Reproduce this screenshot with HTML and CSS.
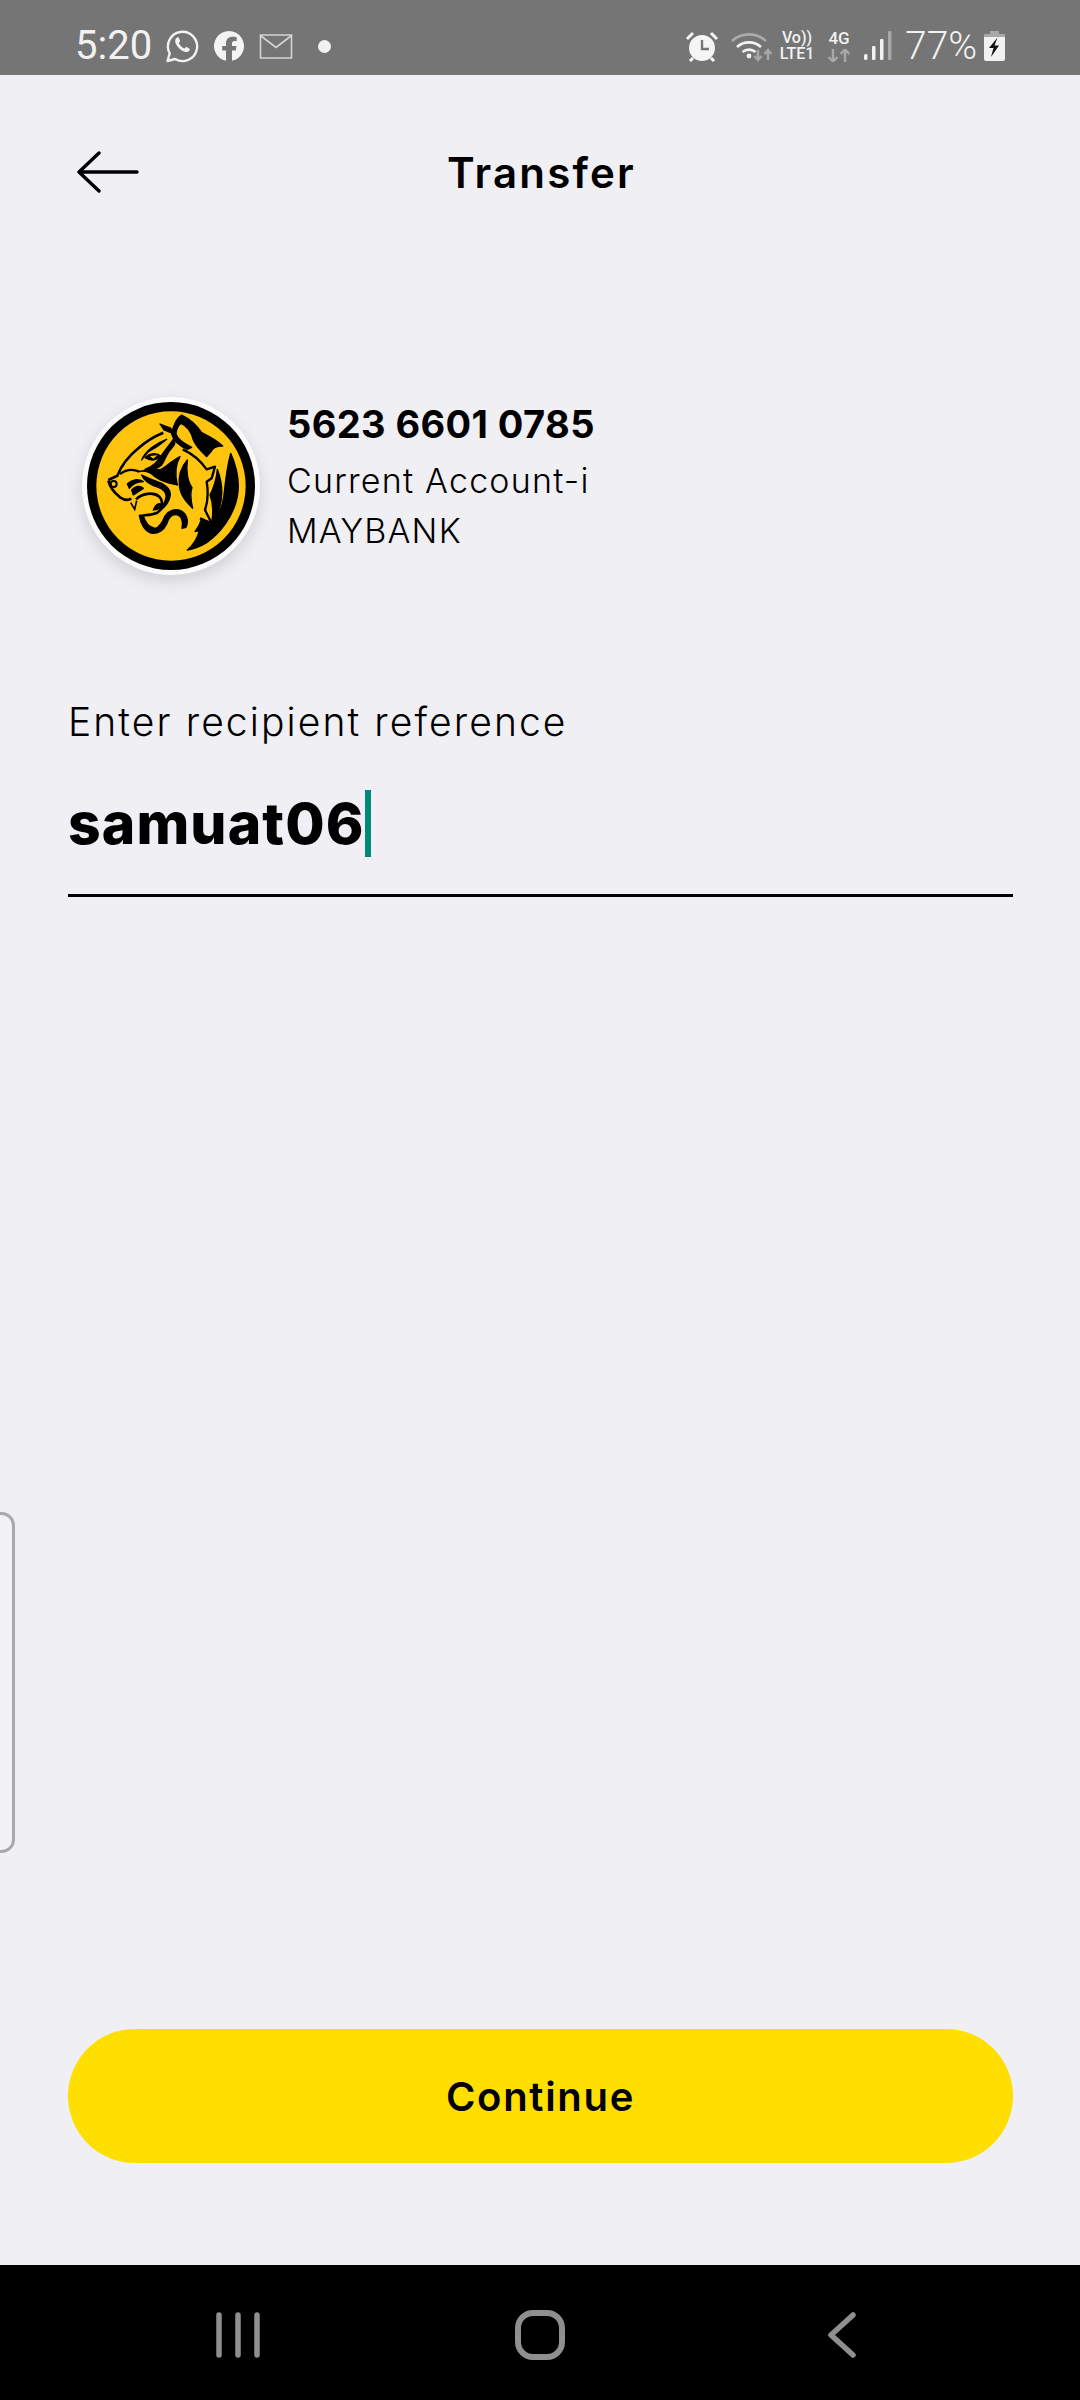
FILE: index.html
```html
<!DOCTYPE html>
<html lang="en">
<head>
<meta charset="utf-8">
<title>Transfer</title>
<link rel="stylesheet" href="styles.css">
</head>
<body>
<div class="screen">
  <div class="status">
    <div class="status-left">
      <span class="clock">5:20</span>
      <svg class="ic-wa" viewBox="0 0 33 34"><path d="M2 32l2.2-7.6A14.6 14.6 0 1 1 9.6 30z" fill="none" stroke="#f2f2f2" stroke-width="2.4" stroke-linejoin="round"/><path d="M11.5 8.5c-2.2 1.5-2.5 4-.8 7 2 3.6 5 6.3 8.3 7.3 2.8.8 4.8-.3 5.5-2.3.2-.6-3.2-2.7-3.8-2.5l-1.7 1.5c-2.3-.7-4.8-3.2-5.7-5.5l1.3-1.7c.2-.6-1.6-4.3-2.1-4.2z" fill="#f2f2f2"/></svg>
      <svg class="ic-fb" viewBox="0 0 30 30"><path d="M12 29.8A15 15 0 1 1 18 29.8V19.5h3.8l.7-4.4H18v-2.7c0-1.4.7-2.4 2.5-2.4h2.2V6.2c-6-1.2-10.5.2-10.7 6v2.9H8.2v4.4H12z" fill="#f4f4f4"/></svg>
      <svg class="ic-mail" viewBox="0 0 33 25"><path d="M1 1h31v23H1zM1.5 2l15 11.5L31.5 2" fill="none" stroke="#d4d4d4" stroke-width="1.6"/></svg>
      <span class="dot"></span>
    </div>
    <div class="status-right">
      <svg class="ic-alarm" viewBox="0 0 34 31"><circle cx="17" cy="17" r="13" fill="#f5f5f5"/><path d="M17 9v9h7" fill="none" stroke="#757575" stroke-width="2.4"/><path d="M2 8l6-6M32 8l-6-6M5 30l3-3M29 30l-3-3" stroke="#f5f5f5" stroke-width="3"/></svg>
      <svg class="ic-wifi" viewBox="0 0 42 31"><path d="M1 10a25 25 0 0 1 34 0" fill="none" stroke="#ababab" stroke-width="2.6"/><path d="M6 16a18 18 0 0 1 24 0M11.5 21a10 10 0 0 1 13 0" fill="none" stroke="#f2f2f2" stroke-width="2.6"/><circle cx="18" cy="25" r="2.4" fill="#f2f2f2"/><path d="M27 19v10M23.5 25l3.5 4 3.5-4M37 29V19M33.5 23l3.5-4 3.5 4" fill="none" stroke="#a8a8a8" stroke-width="2.4"/></svg>
      <div class="volte"><span>Vo))</span><span>LTE1</span></div>
      <div class="net">
        <span>4G</span>
        <svg class="ic-updown" viewBox="0 0 24 13"><path d="M6 0v12M1.5 8L6 12.5 10.5 8M18 13V1M13.5 5L18 .5 22.5 5" fill="none" stroke="#a8a8a8" stroke-width="2.4"/></svg>
      </div>
      <svg class="ic-signal" viewBox="0 0 28 30"><g fill="#f2f2f2"><rect x="0" y="23" width="3.5" height="6" rx="1.5"/><rect x="8" y="15" width="3.5" height="14" rx="1"/><rect x="16" y="8" width="3.5" height="21" rx="1"/></g><rect x="24" y="0" width="3.5" height="29" rx="1" fill="#a8a8a8"/></svg>
      <span class="pct">77%</span>
      <svg class="ic-batt" viewBox="0 0 21 30"><path d="M6 0h9v3h6v10H0V3h6z" fill="#a8a8a8"/><path d="M0 13h21v15a2 2 0 0 1-2 2H2a2 2 0 0 1-2-2z" fill="#f2f2f2"/><rect y="6" width="21" height="8" fill="#f2f2f2"/><path d="M13.5 6.5L5 17h4.5l-2.500 9 8-11.500h-4.500z" fill="#111"/></svg>
    </div>
  </div>

  <main class="main">
    <header class="topbar">
      <svg class="back" viewBox="0 0 62 42"><path d="M2 21h58M22 2L2 21l20 19" fill="none" stroke="#000" stroke-width="3.4" stroke-linecap="round" stroke-linejoin="round"/></svg>
      <h1 class="title">Transfer</h1>
      <span></span>
    </header>

    <section class="account">
      <div class="logo">
        <svg viewBox="-54 -39 534 534">
          <circle cx="213" cy="228" r="252" fill="#000"/>
          <circle cx="213" cy="228" r="224" fill="#fec40e"/>
          <path d="M25 210L52 197C65 165 90 135 115 115C140 92 165 78 190 68" fill="none" stroke="#000" stroke-width="8"/>
          <path d="M25 212C30 232 45 250 60 262C72 270 84 272 94 266" fill="none" stroke="#000" stroke-width="8"/>
          <circle cx="41" cy="222" r="9" fill="none" stroke="#000" stroke-width="6"/>
          <path d="M60 192C82 176 102 178 118 185" fill="none" stroke="#000" stroke-width="7"/>
          <path d="M248 118C275 130 300 150 320 178L345 170L335 205L320 215C325 245 322 280 315 300L335 340L300 325" fill="none" stroke="#000" stroke-width="7" stroke-linejoin="round"/>
          <path d="M108 268C125 250 160 245 178 260C192 275 188 295 172 308C155 315 135 315 118 318" fill="none" stroke="#000" stroke-width="8"/>
          <path d="M92 278L104 298L110 272" fill="none" stroke="#000" stroke-width="5"/>
          <g fill="#000" stroke="#000" stroke-width="4" stroke-linejoin="round">
            <path d="M180 42L212 54L218 70L192 60Z"/>
            <path d="M245 15C272 28 292 48 305 68C325 78 350 90 368 108C350 108 338 112 333 125L320 140C305 125 288 110 280 90C275 70 262 48 243 40C235 45 228 60 228 72C232 88 250 100 275 112L262 118C240 108 220 92 215 72C220 45 232 22 245 15Z"/>
            <path d="M392 130C410 170 420 215 412 260C400 320 360 370 320 398C300 410 280 418 262 420C280 405 292 385 298 362L285 365C295 352 302 338 305 325L330 345C355 320 368 290 372 255C376 215 380 175 392 130Z"/>
            <path d="M352 178C368 220 370 262 356 302C350 320 342 332 335 338C340 310 340 280 330 255C342 232 350 205 352 178Z"/>
            <path d="M262 150C245 170 235 195 238 225C240 255 258 275 278 295C272 270 270 250 276 232C262 215 258 180 262 150Z"/>
            <path d="M125 150C135 125 165 100 200 88C180 105 165 115 150 122C140 128 132 140 125 150Z"/>
            <path d="M135 143C150 128 172 128 182 138C172 150 155 155 135 143Z"/>
            <path d="M135 178C155 172 175 155 190 128L220 88C228 95 225 105 215 115C200 130 195 150 185 165C170 178 150 182 135 178Z"/>
            <path d="M118 185C130 180 150 185 165 200C185 215 210 220 232 225C225 195 225 165 240 140C210 155 195 175 182 178C165 180 140 178 118 185Z"/>
            <path d="M125 195C130 210 150 225 175 232C190 238 200 245 198 262C195 280 180 300 170 310C185 300 205 285 210 260C215 240 200 228 185 220C165 212 145 205 125 195Z"/>
            <path d="M82 222C95 208 115 205 130 215C115 215 100 220 88 235Z"/>
            <path d="M95 240C105 228 120 225 130 235L100 255Z"/>
            <path d="M160 300C165 285 175 278 185 282C182 292 175 300 160 300Z"/>
            <path d="M118 316L130 318C135 335 145 352 165 355C180 352 188 335 195 318C205 302 225 295 242 302C258 310 268 330 258 352L246 355C250 335 245 318 230 314C215 312 205 325 200 342C192 360 175 372 155 370C135 365 122 342 118 316Z"/>
          </g>
          <path d="M150 138L172 136L160 146Z" fill="#fec40e"/>
        </svg>
      </div>
      <div class="account-info">
        <div class="acc-no">5623 6601 0785</div>
        <div class="acc-line">Current Account-i</div>
        <div class="acc-line">MAYBANK</div>
      </div>
    </section>

    <section class="field">
      <label class="field-label">Enter recipient reference</label>
      <div class="field-input"><span class="field-value">samuat06</span><span class="caret"></span></div>
    </section>

    <div class="actions">
      <button class="continue" type="button">Continue</button>
    </div>
  </main>

  <nav class="navbar">
    <svg class="nav-recent" viewBox="0 0 44 46"><path d="M3 3v40M22 3v40M41 3v40" stroke="#8f8f8f" stroke-width="5.5" stroke-linecap="round"/></svg>
    <svg class="nav-home" viewBox="0 0 50 50"><rect x="3" y="3" width="44" height="44" rx="15" fill="none" stroke="#8f8f8f" stroke-width="6"/></svg>
    <svg class="nav-back" viewBox="0 0 28 46"><path d="M25 3L3 23l22 20" fill="none" stroke="#8f8f8f" stroke-width="5.5" stroke-linecap="round" stroke-linejoin="round"/></svg>
  </nav>

  <div class="edge-handle"></div>
</div>
</body>
</html>
```

FILE: styles.css
```css
* { box-sizing: border-box; }
html, body { margin: 0; padding: 0; }
body { font-family: Inter, "Open Sans", sans-serif; color: #000; background: #efeff4; }
svg { display: block; flex: none; }

.screen { position: relative; width: 1080px; height: 2400px; display: flex; flex-direction: column; overflow: hidden; }

.status { height: 75px; flex: none; background: #757575; display: flex; justify-content: space-between; align-items: center; padding: 17px 75px 0; color: #f2f2f2; }
.status-left, .status-right { display: flex; align-items: center; }
.clock { font-family: Roboto, sans-serif; font-size: 40px; line-height: 46px; width: 90px; }
.ic-wa { width: 34px; height: 34px; }
.ic-fb { width: 30px; height: 30px; margin-left: 15px; }
.ic-mail { width: 34px; height: 25px; margin-left: 15px; }
.dot { width: 13px; height: 13px; border-radius: 50%; background: #f2f2f2; margin-left: 25px; }
.ic-alarm { width: 34px; height: 31px; }
.ic-wifi { width: 42px; height: 31px; margin-left: 12px; }
.volte { width: 38px; margin-left: 5px; display: flex; flex-direction: column; align-items: center; font-family: Roboto, sans-serif; font-weight: 500; font-size: 16px; line-height: 16px; }
.net { width: 24px; margin-left: 11px; display: flex; flex-direction: column; align-items: center; gap: 3px; font-family: Roboto, sans-serif; font-weight: 500; font-size: 17px; line-height: 16px; }
.ic-updown { width: 24px; height: 13px; }
.ic-signal { width: 28px; height: 30px; margin-left: 13px; }
.pct { font-family: Roboto, sans-serif; font-weight: 300; font-size: 39px; line-height: 46px; margin-left: 13px; width: 79px; }
.ic-batt { width: 21px; height: 30px; }

.main { flex: 1; display: flex; flex-direction: column; }
.topbar { display: grid; grid-template-columns: 1fr auto 1fr; align-items: center; padding: 60px 68px 0 77px; height: 134px; }
.back { width: 62px; height: 42px; }
.title { margin: 0; font-size: 42px; font-weight: 600; line-height: 74px; letter-spacing: 2.2px; transform: translate(-3px, 1px); }

.account { display: flex; align-items: center; gap: 27px; margin: 188px 0 0 82px; }
.logo { width: 178px; height: 178px; border-radius: 50%; background: #fbfbfc; box-shadow: 0 6px 16px rgba(0,0,0,.13); }
.logo svg { width: 178px; height: 178px; }
.account-info { display: flex; flex-direction: column; margin-top: -25px; }
.acc-no { font-size: 38px; font-weight: 700; line-height: 64px; letter-spacing: .4px; }
.acc-line { font-size: 34px; font-weight: 300; line-height: 50px; letter-spacing: 1.2px; }

.field { margin: 122px 67px 0 68px; }
.field-label { display: block; font-size: 39px; font-weight: 300; line-height: 50px; letter-spacing: 2.1px; }
.field-input { display: flex; align-items: center; height: 150px; border-bottom: 3px solid #000; padding-top: 28px; padding-bottom: 22px; }
.field-value { font-size: 57px; font-weight: 800; line-height: 67px; letter-spacing: 1.1px; }
.caret { width: 6px; height: 67px; background: #00897b; }

.actions { margin-top: auto; padding: 0 67px 102px 68px; }
.continue { display: block; width: 100%; height: 134px; border: 0; border-radius: 67px; background: #ffdf00; color: #000; font-family: inherit; font-size: 40px; font-weight: 600; letter-spacing: 1.7px; }

.navbar { height: 135px; flex: none; background: #000; display: flex; align-items: center; padding: 5px 0 0 216px; }
.nav-recent { width: 44px; height: 46px; }
.nav-home { width: 50px; height: 50px; margin-left: 255px; }
.nav-back { width: 28px; height: 46px; margin-left: 263px; }

.edge-handle { position: absolute; left: -12px; top: 1512px; width: 27px; height: 341px; border: 3px solid #a9a9a9; border-radius: 14px; background: #f2f2f5; }
```
